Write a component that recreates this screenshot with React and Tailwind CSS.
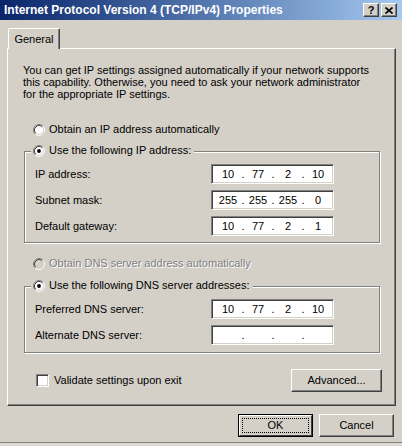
import React from "react";

const FONT = { fontFamily: '"Liberation Sans", Arial, sans-serif' };

function Radio({ checked, disabled }) {
  return (
    <svg width="12" height="12" viewBox="0 0 12 12" className="shrink-0">
      <circle cx="6" cy="6" r="4.5" fill={disabled ? "#d4d0c8" : "#ffffff"} />
      <path d="M2.11 9.89 A5.5 5.5 0 0 1 9.89 2.11" stroke="#808080" strokeWidth="1" fill="none" />
      <path d="M9.89 2.11 A5.5 5.5 0 0 1 2.11 9.89" stroke="#ffffff" strokeWidth="1" fill="none" />
      <path d="M2.82 9.18 A4.5 4.5 0 0 1 9.18 2.82" stroke="#404040" strokeWidth="1" fill="none" />
      <path d="M9.18 2.82 A4.5 4.5 0 0 1 2.82 9.18" stroke="#d4d0c8" strokeWidth="1" fill="none" />
      {checked && <circle cx="6" cy="6" r="1.9" fill="#000000" />}
    </svg>
  );
}

function IpField({ parts }) {
  return (
    <div className="w-[123px] h-[20px] bg-white border border-t-[#808080] border-l-[#808080] border-b-white border-r-white shadow-[inset_1px_1px_0_#404040,inset_-1px_-1px_0_#d4d0c8] flex items-center pl-[4px] text-[11px] text-black">
      {parts.map((p, i) => (
        <React.Fragment key={i}>
          <span className="w-[24px] text-center leading-[13px]">{p}</span>
          {i < 3 && <span className="w-[6px] text-center leading-[13px]">.</span>}
        </React.Fragment>
      ))}
    </div>
  );
}

function Row({ label, parts }) {
  return (
    <div className="flex items-center h-[20px]">
      <span className="w-[186px] pl-[10px] text-[11px] leading-[13px]">{label}</span>
      <IpField parts={parts} />
    </div>
  );
}

function Group({ legend, children }) {
  return (
    <div className="ml-[16px] w-[356px] border border-[#808080] shadow-[1px_1px_0_#ffffff,inset_1px_1px_0_#ffffff] flex flex-col">
      <div className="-mt-[8px] ml-[6px] self-start flex items-center gap-[4px] bg-[#d4d0c8] px-[2px] h-[13px]">
        <Radio checked />
        <span className="text-[11px] leading-[13px] pr-[1px]">{legend}</span>
      </div>
      {children}
    </div>
  );
}

function Button({ children, w = "w-[75px]" }) {
  return (
    <div className={`${w} h-[23px] bg-[#d4d0c8] border border-t-white border-l-white border-b-[#404040] border-r-[#404040] shadow-[inset_-1px_-1px_0_#808080] flex items-center justify-center text-[11px] leading-[13px]`}>
      {children}
    </div>
  );
}

export default function App() {
  return (
    <div className="w-[402px] h-[446px] bg-[#d4d0c8] text-black flex flex-col overflow-hidden" style={FONT}>
      {/* title bar */}
      <div className="h-[20px] shrink-0 bg-gradient-to-r from-[#0a246a] to-[#a6caf0] flex items-center pl-[4px] pr-[5px]">
        <span className="text-white font-bold text-[12px] leading-[14px] flex-1">
          Internet Protocol Version 4 (TCP/IPv4) Properties
        </span>
        <div className="flex">
          <div className="w-[16px] h-[14px] bg-[#d4d0c8] border border-t-white border-l-white border-b-[#404040] border-r-[#404040] shadow-[inset_-1px_-1px_0_#808080] flex items-center justify-center text-[11px] font-bold leading-none">?</div>
          <div className="w-[16px] h-[14px] ml-[2px] bg-[#d4d0c8] border border-t-white border-l-white border-b-[#404040] border-r-[#404040] shadow-[inset_-1px_-1px_0_#808080] flex items-center justify-center">
            <svg width="8" height="7" viewBox="0 0 8 7">
              <path d="M0.5 0.5 L7.5 6.5 M7.5 0.5 L0.5 6.5" stroke="#000" strokeWidth="1.6" />
            </svg>
          </div>
        </div>
      </div>

      <div className="pl-[7px] pt-[8px] flex flex-col">
        {/* tab */}
        <div className="ml-[1px] w-[52px] h-[21px] border-t border-l border-white border-r border-r-[#404040] shadow-[inset_-1px_0_0_#808080] rounded-t-[2px] flex items-center justify-center text-[11px] leading-[13px] relative z-10 bg-[#d4d0c8] -mb-[1px]">
          General
        </div>
        {/* panel */}
        <div className="w-[389px] h-[358px] border-t border-l border-white border-r border-b border-r-[#404040] border-b-[#404040] shadow-[inset_-1px_-1px_0_#808080] flex flex-col">
          <p className="mt-[15px] ml-[15px] text-[11px] leading-[12px]">
            You can get IP settings assigned automatically if your network supports
            <br />
            this capability. Otherwise, you need to ask your network administrator
            <br />
            for the appropriate IP settings.
          </p>

          <div className="mt-[23px] ml-[25px] flex items-center gap-[4px] h-[13px]">
            <Radio />
            <span className="text-[11px] leading-[13px]">Obtain an IP address automatically</span>
          </div>

          <div className="mt-[15px]">
            <Group legend="Use the following IP address:">
              <div className="mt-[7px] flex flex-col gap-[6px] pb-[6px]">
                <Row label="IP address:" parts={["10", "77", "2", "10"]} />
                <Row label="Subnet mask:" parts={["255", "255", "255", "0"]} />
                <Row label="Default gateway:" parts={["10", "77", "2", "1"]} />
              </div>
            </Group>
          </div>

          <div className="mt-[14px] ml-[25px] flex items-center gap-[4px] h-[13px]">
            <Radio disabled />
            <span className="text-[11px] leading-[13px] text-[#808080] [text-shadow:1px_1px_0_#ffffff]">
              Obtain DNS server address automatically
            </span>
          </div>

          <div className="mt-[16px]">
            <Group legend="Use the following DNS server addresses:">
              <div className="mt-[7px] flex flex-col gap-[6px] pb-[7px]">
                <Row label="Preferred DNS server:" parts={["10", "77", "2", "10"]} />
                <Row label="Alternate DNS server:" parts={["", "", "", ""]} />
              </div>
            </Group>
          </div>

          <div className="mt-[16px] flex items-center justify-between pl-[28px] pr-[13px]">
            <div className="flex items-center gap-[5px]">
              <div className="w-[13px] h-[13px] bg-white border border-t-[#808080] border-l-[#808080] border-b-white border-r-white shadow-[inset_1px_1px_0_#404040,inset_-1px_-1px_0_#d4d0c8]" />
              <span className="text-[11px] leading-[13px]">Validate settings upon exit</span>
            </div>
            <Button w="w-[91px]">Advanced...</Button>
          </div>
        </div>

        {/* bottom buttons */}
        <div className="mt-[8px] flex justify-end gap-[6px] pr-[8px]">
          <div className="w-[75px] h-[23px] border border-black">
            <div className="w-full h-full bg-[#d4d0c8] border border-t-white border-l-white border-b-[#404040] border-r-[#404040] flex items-center justify-center p-[2px]">
              <div className="w-full h-full border border-dotted border-black flex items-center justify-center text-[11px] leading-[13px]">
                OK
              </div>
            </div>
          </div>
          <Button>Cancel</Button>
        </div>
      </div>
      <div className="mt-auto h-[4px] border-t border-[#808080] bg-[#dcd9d2]" />
    </div>
  );
}
